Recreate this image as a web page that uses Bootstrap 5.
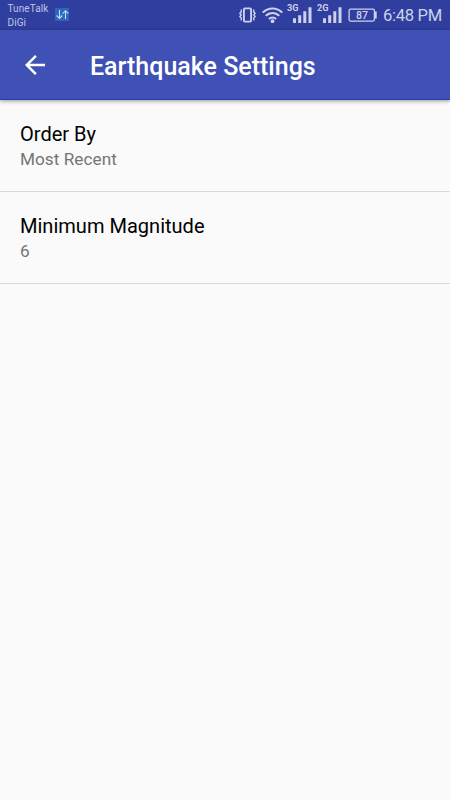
<!DOCTYPE html>
<html lang="en">
<head>
<meta charset="utf-8">
<meta name="viewport" content="width=device-width, initial-scale=1">
<title>Earthquake Settings</title>
<link href="https://cdn.jsdelivr.net/npm/bootstrap@5.3.0/dist/css/bootstrap.min.css" rel="stylesheet">
<style>
  body { font-family: Roboto, "Noto Sans", sans-serif; background: #fafafa; overflow: hidden; }
  .status-bar { height: 30px; background: #303f9f; color: #cdd1ea; padding: 0 8px 0 7px; }
  .carriers { font-size: 10px; line-height: 13.5px; letter-spacing: .1px; color: #bfc5e4; padding: 2px 0 0 .5px; width: 48px; }
  .clock { font-size: 16.6px; line-height: 30px; letter-spacing: -.3px; padding-top: 1px; width: 59px; margin-left: 6px; }
  .app-bar { height: 70px; background: #3f51b5; box-shadow: 0 1px 4px rgba(0,0,0,.42); padding: 0 20px; border-bottom: 1px solid #2440ae; }
  .app-title { font-size: 25px; line-height: 30px; font-weight: 500; margin: 5px 0 0 40px; }
  .setting { height: 92px; padding: 21px 20px 0; background: #fafafa; border-color: #dadada; border-bottom-width: 1px !important; }
  .setting-name { font-size: 20.05px; line-height: 26px; color: #000; }
  .setting-value { font-size: 17.2px; line-height: 22px; letter-spacing: .03px; color: #757575; margin-top: 1px; }
  svg { display: block; flex: none; }
</style>
</head>
<body>
<div class="status-bar d-flex align-items-start justify-content-between">
  <div class="d-flex">
    <div class="carriers text-nowrap"><div>TuneTalk</div><div>DiGi</div></div>
    <svg width="15" height="30" viewBox="55 0 15 30">
      <rect x="55" y="8" width="14" height="13" fill="#2a66c0"/>
      <path d="M59.5 10v8.500M56.600 15.500l2.900 3 2.800-3M65.500 19v-8.200M62.600 13.700l2.900-3 2.900 3" fill="none" stroke="#c6daf2" stroke-width="1.100"/>
    </svg>
  </div>
  <div class="d-flex">
    <svg width="139" height="30" viewBox="238 0 139 30" fill="#cdd1ea" font-family="Roboto, sans-serif">
      <g fill="none" stroke="#cdd1ea">
        <rect x="243.900" y="8.400" width="7.200" height="13.200" rx="1" stroke-width="1.900"/>
        <path d="M241.200 9.500v2.600l-1.300 1.300 1.300 1.600-1.300 1.500 1.300 1.400v2.600M253.800 9.500v2.600l1.300 1.300-1.300 1.600 1.300 1.500-1.300 1.400v2.600" stroke-width="1.400"/>
        <path d="M262.700 12.600a13.500 13.500 0 0 1 19.600 0M265.800 15.900a9.300 9.300 0 0 1 13.400 0M268.900 19a5 5 0 0 1 7.200 0" stroke-width="2"/>
        <rect x="349.100" y="9.100" width="25.300" height="12" rx="1.500" stroke-width="1.300"/>
      </g>
      <circle cx="272.500" cy="21.200" r="1.900"/>
      <text x="287" y="11" font-size="8.500" font-weight="700" textLength="11.500" lengthAdjust="spacingAndGlyphs">3G</text>
      <path d="M293 18.300h3V23h-3zM298.200 15.300h3V23h-3zM303.300 11.300h3V23h-3zM308.500 7.300h3V23h-3z"/>
      <text x="317" y="11" font-size="8.500" font-weight="700" textLength="11.500" lengthAdjust="spacingAndGlyphs">2G</text>
      <path d="M323 18.300h3V23h-3zM328.200 15.300h3V23h-3zM333.300 11.300h3V23h-3zM338.500 7.300h3V23h-3z"/>
      <path d="M375 11.500h1.700v7H375z"/>
      <text x="362" y="19" font-size="10.500" font-weight="500" text-anchor="middle">87</text>
    </svg>
    <div class="clock text-nowrap">6:48 PM</div>
  </div>
</div>
<header class="app-bar d-flex align-items-center position-relative z-1">
  <svg width="30" height="30" viewBox="0 0 24 24" aria-label="Back"><path fill="#fff" d="M20 11H7.830l5.590-5.590L12 4l-8 8 8 8 1.410-1.410L7.830 13H20v-2z"/></svg>
  <h1 class="app-title text-white text-nowrap mb-0">Earthquake Settings</h1>
</header>
<main class="list-group list-group-flush">
  <div class="setting list-group-item">
    <div class="setting-name">Order By</div>
    <div class="setting-value">Most Recent</div>
  </div>
  <div class="setting list-group-item">
    <div class="setting-name">Minimum Magnitude</div>
    <div class="setting-value">6</div>
  </div>
</main>
<script src="https://cdn.jsdelivr.net/npm/bootstrap@5.3.0/dist/js/bootstrap.bundle.min.js"></script>
</body>
</html>
